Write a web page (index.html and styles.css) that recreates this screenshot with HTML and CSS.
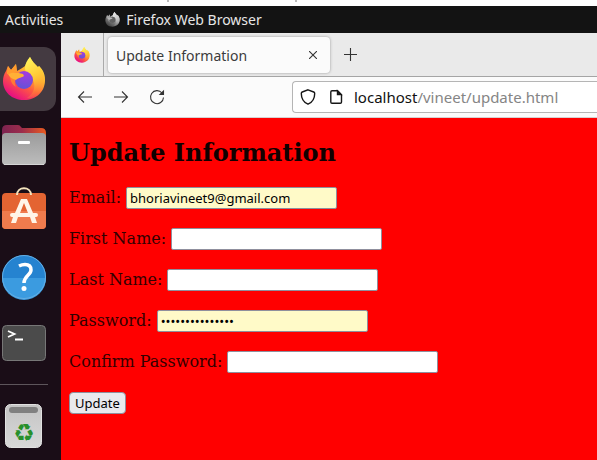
FILE: index.html
```html
<!DOCTYPE html>
<html lang="en">
<head>
<meta charset="utf-8">
<title>Update Information</title>
<link rel="stylesheet" href="styles.css">
</head>
<body>
<svg class="defs" aria-hidden="true">
  <defs>
    <linearGradient id="flame" x1=".85" y1=".1" x2=".3" y2=".95"><stop offset="0" stop-color="#fff04d"/><stop offset=".35" stop-color="#ffb52e"/><stop offset=".65" stop-color="#ff5a40"/><stop offset="1" stop-color="#e9127f"/></linearGradient>
    <linearGradient id="tail" x1=".3" y1="0" x2=".6" y2="1"><stop offset="0" stop-color="#fff35a"/><stop offset=".5" stop-color="#ffc936"/><stop offset="1" stop-color="#ff8a30" stop-opacity="0"/></linearGradient>
    <radialGradient id="globe" cx=".6" cy=".1" r=".9"><stop offset="0" stop-color="#a53be0"/><stop offset="1" stop-color="#6352d8"/></radialGradient>
    <linearGradient id="fold" x1="0" x2="1"><stop offset="0" stop-color="#7d2350"/><stop offset=".45" stop-color="#9c2c4c"/><stop offset="1" stop-color="#ea5b20"/></linearGradient>
    <linearGradient id="silver" x1="0" y1="0" x2="0" y2="1"><stop offset="0" stop-color="#9b9b9b"/><stop offset="1" stop-color="#bdbdbd"/></linearGradient>
    <linearGradient id="bin" x1="0" y1="0" x2="0" y2="1"><stop offset="0" stop-color="#c4c4c4"/><stop offset="1" stop-color="#d8d8d8"/></linearGradient>
    <symbol id="firefox" viewBox="0 0 42 44">
      <path fill="url(#flame)" d="M3 14 5 9l3 4 5-6 1 7c3-2 6-3 8-5L27 0c2 4 5 7 8 10l1-1c4 4 6 8 6 14 0 12-9 20-21 20S0 35 0 24c0-4 1-7 3-10Z"/>
      <path fill="url(#tail)" d="M27 0c2 5 5 7 8 11l1-2c7 8 7 18 2 25-3 5-8 7-14 7 7-4 9-12 6-18-2-5-8-6-8-12 0-4 2-8 5-11Z"/>
      <circle cx="21" cy="23" r="9" fill="url(#globe)"/>
      <path fill="#ff7a35" d="M7 17c2 0 5 0 9 2l-3 3c-2 3-1 6 0 8-5-3-6-8-6-13Z"/>
      <path fill="#ff9b2d" d="M4 14 5 9l3 4 5-6 1 8c-4 1-7 2-10 2Z"/>
      <path fill="#ffb035" d="M5 17c5-2 10-1 15 0l1 2c-2 2-5 1-8 4-3-1-6-2-8-6Z"/>
    </symbol>
  </defs>
</svg>

<div class="desktop">
  <div class="strip" aria-hidden="true"></div>
  <header class="topbar">
    <span>Activities</span>
    <span class="app"><svg class="app-icon" aria-hidden="true"><use href="#firefox"/></svg>Firefox Web Browser</span>
  </header>

  <div class="workspace">
    <nav class="dock" aria-label="Dock">
      <button class="launcher active" aria-label="Firefox">
        <svg width="48" height="64"><use href="#firefox" x="3" y="10" width="42" height="44"/></svg>
      </button>
      <button class="launcher" aria-label="Files">
        <svg width="48" height="64" viewBox="0 0 48 64">
          <path fill="url(#fold)" d="M2 26v-9q0-5 5-5h11q2 0 3 2l1 1h19q5 0 5 5v8H2Z"/>
          <rect x="2" y="20" width="44" height="32" rx="4" fill="url(#silver)"/>
          <path d="M4 51.500h40" stroke="#d5d5d5"/>
          <rect x="18" y="28" width="12" height="3" rx="1" fill="#fff"/>
        </svg>
      </button>
      <button class="launcher" aria-label="Software">
        <svg width="48" height="64" viewBox="0 0 48 64">
          <rect x="2" y="14" width="44" height="36" rx="4" fill="#e46432"/>
          <path fill="#f07b4d" d="M2 32h44v14q0 4-4 4H6q-4 0-4-4Z"/>
          <path d="M17 16c0-9 14-9 14 0" fill="none" stroke="#f4e4bd" stroke-width="2"/>
          <path fill="#fff5e8" fill-rule="evenodd" d="M21 20h6l6 14h3q2 0 2 2t-2 2h-1l2 6h-5l-2-6H18l-2 6h-5l2-6h-1q-2 0-2-2t2-2h3Zm3 4-4 10h8Z"/>
        </svg>
      </button>
      <button class="launcher" aria-label="Help">
        <svg width="48" height="64" viewBox="0 0 48 64">
          <circle cx="24" cy="32" r="22" fill="#2583d0"/>
          <path fill="#3b9be0" d="M2 33h44a22 22 0 0 1-44 0Z"/>
          <circle cx="24" cy="32" r="21.500" fill="none" stroke="#65afe4"/>
          <path d="M19 21q3-1.500 6-1.500c4 0 6 2 6 5.500 0 5-7 6-7 13" fill="none" stroke="#fff" stroke-width="3.500"/>
          <circle cx="24" cy="43.500" r="2.500" fill="#fff"/>
        </svg>
      </button>
      <button class="launcher" aria-label="Terminal">
        <svg width="48" height="64" viewBox="0 0 48 64">
          <rect x="2.500" y="14.500" width="43" height="35" rx="4" fill="#4b4b4b" stroke="#777"/>
          <path d="m8 20 6.500 3L8 26M15 28.500h8" fill="none" stroke="#fff" stroke-width="1.800"/>
        </svg>
      </button>
      <hr class="divider">
      <button class="launcher" aria-label="Trash">
        <svg width="48" height="64" viewBox="0 0 48 64">
          <rect x="5.500" y="10.500" width="36" height="43" rx="5" fill="url(#bin)" stroke="#e1e1e1"/>
          <rect x="9" y="13" width="29" height="6" rx="3" fill="#808080"/>
          <text class="recycle" x="24" y="47" text-anchor="middle">♻</text>
        </svg>
      </button>
    </nav>

    <main class="browser">
      <div class="tabs">
        <button class="pinned" aria-label="Pinned tab"><svg width="16" height="16"><use href="#firefox"/></svg></button>
        <div class="tab">
          <span>Update Information</span>
          <button class="icon-button" aria-label="Close tab"><svg width="8" height="8" viewBox="0 0 8 8"><path d="m0 0 8 8M8 0 0 8"/></svg></button>
        </div>
        <button class="icon-button new-tab" aria-label="New tab"><svg width="13" height="13" viewBox="0 0 13 13"><path d="M6.500 0v13M0 6.500h13"/></svg></button>
      </div>
      <div class="toolbar">
        <button class="icon-button" aria-label="Back"><svg width="16" height="16" viewBox="0 0 16 16"><path d="M15 8H2M7 2.500 1.500 8 7 13.500"/></svg></button>
        <button class="icon-button" aria-label="Forward"><svg width="16" height="16" viewBox="0 0 16 16"><path d="M1 8h13M9 2.500 14.500 8 9 13.500"/></svg></button>
        <button class="icon-button" aria-label="Reload"><svg width="16" height="16" viewBox="0 0 16 16"><path d="M13 4a6.500 6.500 0 1 0 1.500 4.500"/><path class="solid" d="M14.500 2v3.500H11Z"/></svg></button>
        <div class="address">
          <svg width="16" height="16" viewBox="0 0 16 16"><path d="m8 .8 5.700 2.200q1 .4 1 1.500C14.700 10 12 13.500 8 15.200 4 13.500 1.300 10 1.300 4.500q0-1.100 1-1.500Z"/></svg>
          <svg width="16" height="16" viewBox="0 0 16 16"><path d="M4 1.800h5.500l4 4V13q0 1.200-1.200 1.200H4q-1.200 0-1.200-1.200V3Q2.800 1.800 4 1.800Z"/><path class="solid" d="M9.500 2v3.500H13Z"/></svg>
          <a class="url" href="#"><span class="host">localhost</span>/vineet/update.html</a>
        </div>
      </div>
      <section class="page">
        <h1>Update Information</h1>
        <form>
          <div class="row"><label for="email">Email:</label><input class="filled" id="email" type="email" value="bhoriavineet9@gmail.com"></div>
          <div class="row"><label for="first">First Name:</label><input id="first" type="text"></div>
          <div class="row"><label for="last">Last Name:</label><input id="last" type="text"></div>
          <div class="row"><label for="password">Password:</label><input class="filled" id="password" type="password" value="abcdefghijklmno"></div>
          <div class="row"><label for="confirm">Confirm Password:</label><input id="confirm" type="password"></div>
          <button class="submit" type="button">Update</button>
        </form>
      </section>
    </main>
  </div>
</div>
</body>
</html>
```
FILE: styles.css
```css
* { box-sizing: border-box; }
body { margin: 0; background: #1a0d17; font-family: "Noto Sans", "Open Sans", sans-serif; }
button { padding: 0; border: 0; background: none; font: inherit; color: inherit; }
svg { display: block; flex: none; }
.defs { position: absolute; width: 0; height: 0; }
.desktop { display: flex; flex-direction: column; min-height: 100vh; }
.strip {
  height: 6px;
  background: linear-gradient(#bbb, #bbb) 167px 0 / 2px 2px no-repeat, linear-gradient(#bbb, #bbb) 295px 0 / 2px 2px no-repeat, #fff;
}
.topbar { display: flex; align-items: center; gap: 42px; height: 27px; padding-left: 5px; background: #131313; color: #e6e6e6; font-size: 14px; }
.app { display: flex; align-items: center; gap: 6px; }
.app-icon { width: 15px; height: 15px; filter: grayscale(1); }
.workspace { display: flex; flex: 1; }
.dock { display: flex; flex: none; flex-direction: column; gap: 2px; width: 61px; padding-top: 14px; }
.launcher { width: 56px; height: 64px; }
.active { border-radius: 0 12px 12px 0; background: #443a41; }
.divider { width: 48px; height: 1px; margin: 7px 0; border: 0; background: #5d555b; }
.recycle { fill: #27902b; font: 24px "DejaVu Sans", sans-serif; }
.browser { display: flex; flex: 1; flex-direction: column; min-width: 0; }
.tabs { display: flex; height: 44px; border-bottom: 1px solid #a5a5a5; background: #eaeaea; }
.pinned { display: flex; align-items: center; justify-content: center; width: 43px; border-right: 1px solid #aaa; }
.tab {
  display: flex; align-items: center; justify-content: space-between;
  width: 222px; margin: 4px 14px 3px 4px; padding: 0 13px 0 8px;
  border-radius: 4px; background: #fbfbfb; box-shadow: 0 0 3px #999;
  color: #3c3c3c; font-size: 14px;
}
.icon-button path, .address path { fill: none; stroke: #333; stroke-width: 1.1; }
.icon-button .solid, .address .solid { fill: #333; }
.toolbar { display: flex; align-items: center; gap: 20px; height: 41px; padding-left: 16px; border-bottom: 1px solid #d8d0d0; background: #fbfbfb; }
.address {
  display: flex; flex: 1; align-items: center; gap: 12px; min-width: 0; height: 32px; margin-left: 107px; padding-left: 7px;
  border: 1px solid #b5b5b5; border-right: 0; border-radius: 4px 0 0 4px; background: #fff;
}
.address path { stroke: #161616; stroke-width: 1.4; }
.url { margin-left: -2px; color: #858585; font-size: 15px; text-decoration: none; white-space: nowrap; }
.host { color: #111; }
.page { flex: 1; padding: 21px 8px 8px; background: #f00; color: #300; font: 16px/20px "DejaVu Serif", serif; }
h1 { margin: 0 0 20px; color: #100; font-size: 24px; line-height: 28px; }
form { display: flex; flex-direction: column; align-items: flex-start; gap: 19px; }
.row { display: flex; align-items: center; gap: 5px; }
input { width: 211px; height: 22px; padding: 1px 3px; border: 1px solid #8f8f9d; border-radius: 2px; background: #fff; color: #000; font: 13px "Noto Sans", "Open Sans", sans-serif; }
.filled { background: #fffac8; }
.submit { height: 22px; padding: 0 5px; border: 1px solid #8f8f9d; border-radius: 4px; background: #e9e9ed; color: #000; font: 13px "Noto Sans", "Open Sans", sans-serif; }
```
